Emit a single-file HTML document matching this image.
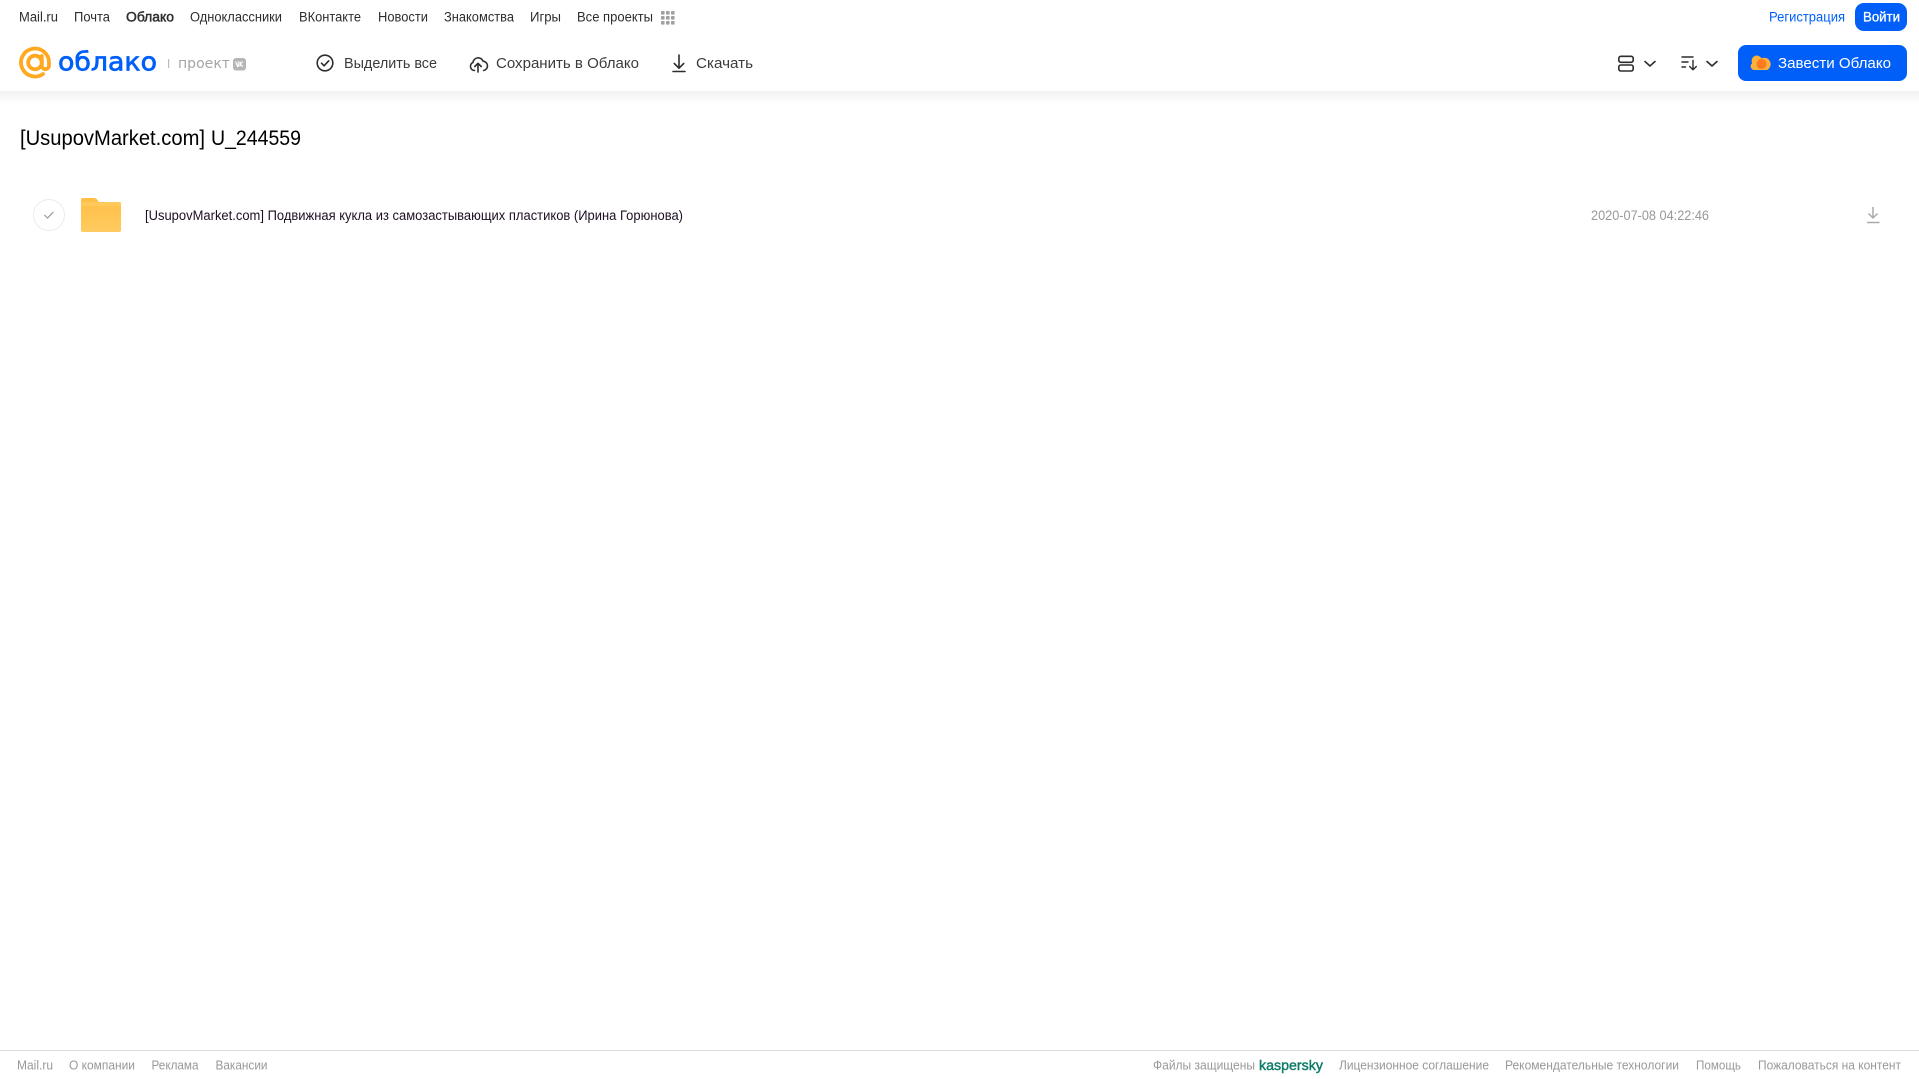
<!DOCTYPE html>
<html lang="ru">
<head>
<meta charset="utf-8">
<title>Облако</title>
<style>
html,body{margin:0;padding:0;background:#fff;width:1919px;height:1079px;overflow:hidden}
svg{display:block;position:absolute;left:0;top:0}
text{font-family:"Liberation Sans","Noto Sans CJK SC",sans-serif}
.n{font-size:13.5px;fill:#2c2d2e}
.t{font-size:15px;fill:#3a3b3c}
.f{font-size:12.5px;fill:#999}
</style>
</head>
<body>
<svg width="1919" height="1079" viewBox="0 0 1919 1079" xmlns="http://www.w3.org/2000/svg">
<defs>
<linearGradient id="sh" x1="0" y1="0" x2="0" y2="1"><stop offset="0" stop-color="#f2f2f2"/><stop offset="1" stop-color="#fff"/></linearGradient>
<linearGradient id="fo" x1="0" y1="0" x2="0" y2="1"><stop offset="0" stop-color="#ffbe45"/><stop offset="1" stop-color="#ffcb60"/></linearGradient>
</defs>
<rect x="0" y="91" width="1919" height="14" fill="url(#sh)"/>

<!-- top nav -->
<text class="n" x="19" y="21.500" textLength="39" lengthAdjust="spacingAndGlyphs">Mail.ru</text>
<text class="n" x="74" y="21.500" textLength="36" lengthAdjust="spacingAndGlyphs">Почта</text>
<text class="n" x="126" y="21.500" textLength="48" lengthAdjust="spacingAndGlyphs" stroke="#2c2d2e" stroke-width=".45">Облако</text>
<text class="n" x="190" y="21.500" textLength="92" lengthAdjust="spacingAndGlyphs">Одноклассники</text>
<text class="n" x="299" y="21.500" textLength="62" lengthAdjust="spacingAndGlyphs">ВКонтакте</text>
<text class="n" x="378" y="21.500" textLength="50" lengthAdjust="spacingAndGlyphs">Новости</text>
<text class="n" x="444" y="21.500" textLength="70" lengthAdjust="spacingAndGlyphs">Знакомства</text>
<text class="n" x="530" y="21.500" textLength="31" lengthAdjust="spacingAndGlyphs">Игры</text>
<text class="n" x="577" y="21.500" textLength="76" lengthAdjust="spacingAndGlyphs">Все проекты</text>
<g fill="#a0a0a0">
<rect x="661" y="11" width="3.600" height="3.600" rx=".8"/><rect x="666" y="11" width="3.600" height="3.600" rx=".8"/><rect x="671" y="11" width="3.600" height="3.600" rx=".8"/>
<rect x="661" y="16" width="3.600" height="3.600" rx=".8"/><rect x="666" y="16" width="3.600" height="3.600" rx=".8"/><rect x="671" y="16" width="3.600" height="3.600" rx=".8"/>
<rect x="661" y="21" width="3.600" height="3.600" rx=".8"/><rect x="666" y="21" width="3.600" height="3.600" rx=".8"/><rect x="671" y="21" width="3.600" height="3.600" rx=".8"/>
</g>

<text x="1769" y="21.500" font-size="13.500" fill="#005ff9" textLength="76" lengthAdjust="spacingAndGlyphs">Регистрация</text>
<rect x="1855" y="3" width="52" height="28" rx="9" fill="#005ff9"/>
<text x="1863" y="21.500" font-size="13.500" fill="#fff" stroke="#fff" stroke-width=".3" textLength="37" lengthAdjust="spacingAndGlyphs">Войти</text>

<!-- logo -->
<g fill="none" stroke="#ffa820" stroke-width="3.800" stroke-linecap="round">
<circle cx="35" cy="62.500" r="6.800"/>
<path d="M41.800 56V65.500a3.600 3.600 0 0 0 7.200 0V62.500a14 14 0 1 0-6 11.500"/>
</g>
<text x="58" y="70.500" font-size="26" style="font-family:'DejaVu Sans',sans-serif" fill="#005ff9" stroke="#005ff9" stroke-width=".7" textLength="99" lengthAdjust="spacingAndGlyphs">облако</text>
<rect x="168" y="59" width="1.200" height="9" fill="#bbb"/>
<text x="178" y="68" font-size="14" style="font-family:'DejaVu Sans',sans-serif" fill="#a5a5a5" textLength="52" lengthAdjust="spacingAndGlyphs">проект</text>
<rect x="233" y="58" width="13" height="12.500" rx="3" fill="#b5b5b5"/>
<path d="M235.500 61.500l2 5h.8v-5M242.800 61.500l-2.600 2.600 2.800 2.600M240 61.500v5" fill="none" stroke="#fff" stroke-width="1.100"/>

<!-- toolbar -->
<g fill="none" stroke="#2c2d2e" stroke-width="1.600" stroke-linecap="round" stroke-linejoin="round">
<circle cx="325" cy="63" r="7.800"/>
<path d="M321.500 63.200l2.600 2.600 4.600-5"/>
<path d="M474.500 70.500a4.200 4.200 0 0 1-1.600-8 5.300 5.300 0 0 1 10.200-1.300 4.700 4.700 0 0 1 .6 9.300"/>
<path d="M478 72v-8.500M474.800 66.500l3.200-3.200 3.200 3.200"/>
<path d="M679 55v13M674.300 63.500l4.700 4.700 4.700-4.700M673 71.500h12"/>
</g>
<text class="t" x="344" y="68" textLength="93" lengthAdjust="spacingAndGlyphs">Выделить все</text>
<text class="t" x="496" y="68" textLength="143" lengthAdjust="spacingAndGlyphs">Сохранить в Облако</text>
<text class="t" x="696" y="68" textLength="57" lengthAdjust="spacingAndGlyphs">Скачать</text>

<!-- view / sort -->
<g fill="none" stroke="#2c2d2e" stroke-width="1.600" stroke-linecap="round" stroke-linejoin="round">
<rect x="1618.800" y="56.300" width="14.400" height="6" rx="2"/>
<rect x="1618.800" y="65" width="14.400" height="6" rx="2"/>
<path d="M1645 61.500l5 4.500 5-4.500"/>
<path d="M1707 61.500l5 4.500 5-4.500"/>
<path d="M1682 57h11M1682 62h6M1682 67h3.500" stroke-width="1.400"/>
<path d="M1693 60.500v9M1689.700 66.500l3.300 3.300 3.300-3.300" stroke-width="1.400"/>
</g>

<!-- CTA -->
<rect x="1738" y="45" width="169" height="36" rx="8" fill="#005ff9"/>
<path d="M1755 70a3.800 3.800 0 0 1-2.800-6.800 5 5 0 0 1 9.300-4.800 5.600 5.600 0 0 1 5.500 11.600z" fill="#ffb03a"/>
<circle cx="1761.500" cy="64" r="5" fill="#ff7a1f"/>
<text x="1778" y="68" font-size="15" fill="#fff" textLength="113" lengthAdjust="spacingAndGlyphs">Завести Облако</text>

<!-- title -->
<text x="20" y="145" font-size="21.500" fill="#000" textLength="185" lengthAdjust="spacingAndGlyphs">[UsupovMarket.com]</text>
<text x="211" y="145" font-size="21.500" fill="#000" textLength="90" lengthAdjust="spacingAndGlyphs">U_244559</text>

<!-- row -->
<circle cx="49" cy="215" r="15.500" fill="#fff" stroke="#ececec" stroke-width="1"/>
<path d="M44.800 215.300l2.800 2.800 5.400-5.800" fill="none" stroke="#a0a0a0" stroke-width="1.300" stroke-linecap="round" stroke-linejoin="round"/>
<path d="M83 198h11q2 0 3.300 1.800l1.700 2.200h20q2 0 2 2v26q0 2-2 2H83q-2 0-2-2V200q0-2 2-2z" fill="url(#fo)"/>
<path d="M81 206v-4h39.800a2 2 0 0 1 .2 2v2z" fill="#ffd06a" opacity=".55"/>
<text x="145" y="220" font-size="13.500" fill="#1c0f24" textLength="183" lengthAdjust="spacingAndGlyphs"></text>
<text x="145" y="220" font-size="13.500" fill="#1c0f24" textLength="538" lengthAdjust="spacingAndGlyphs">[UsupovMarket.com] Подвижная кукла из самозастывающих пластиков (Ирина Горюнова)</text>
<text x="1591" y="220" font-size="13.500" fill="#999" textLength="118" lengthAdjust="spacingAndGlyphs">2020-07-08 04:22:46</text>
<path d="M1873 207v11M1868.500 213.500l4.500 4.500 4.500-4.500M1867 222.500h12.500" fill="none" stroke="#aaa" stroke-width="1.500"/>

<!-- footer -->
<rect x="0" y="1050" width="1919" height="1" fill="#dcdcdc"/>
<text class="f" x="17" y="1069.500" textLength="36" lengthAdjust="spacingAndGlyphs">Mail.ru</text>
<text class="f" x="69" y="1069.500" textLength="66" lengthAdjust="spacingAndGlyphs">О компании</text>
<text class="f" x="151.500" y="1069.500" textLength="47" lengthAdjust="spacingAndGlyphs">Реклама</text>
<text class="f" x="215.500" y="1069.500" textLength="52" lengthAdjust="spacingAndGlyphs">Вакансии</text>
<text class="f" x="1153" y="1069.500" textLength="102" lengthAdjust="spacingAndGlyphs">Файлы защищены</text>
<text x="1259" y="1070" font-size="13.500" fill="#0c7a66" stroke="#0c7a66" stroke-width=".4" textLength="64" lengthAdjust="spacingAndGlyphs">kaspersky</text>
<text class="f" x="1339" y="1069.500" textLength="150" lengthAdjust="spacingAndGlyphs">Лицензионное соглашение</text>
<text class="f" x="1505" y="1069.500" textLength="174" lengthAdjust="spacingAndGlyphs">Рекомендательные технологии</text>
<text class="f" x="1696" y="1069.500" textLength="45" lengthAdjust="spacingAndGlyphs">Помощь</text>
<text class="f" x="1758" y="1069.500" textLength="143" lengthAdjust="spacingAndGlyphs">Пожаловаться на контент</text>
</svg>
</body>
</html>
